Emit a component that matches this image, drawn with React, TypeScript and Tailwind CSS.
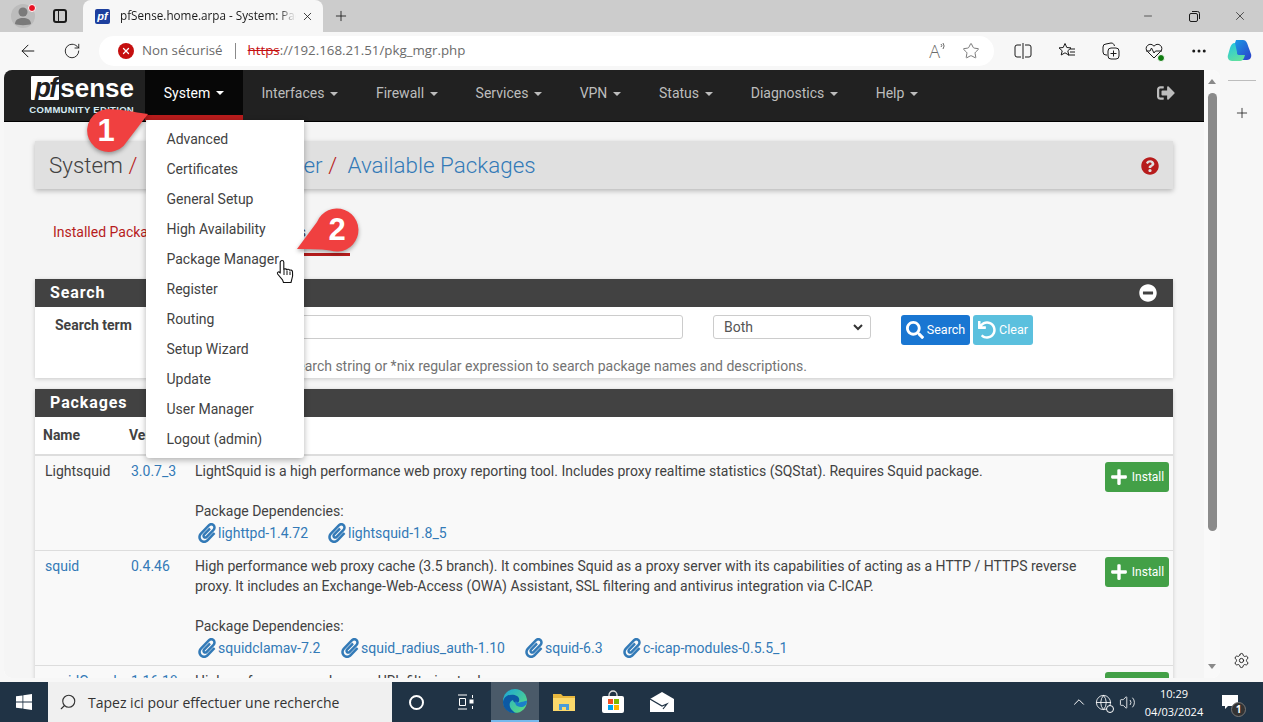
import React from 'react';
import { ArrowLeft, RotateCw, Plus, X, Minus, Search as SearchGlass, ChevronUp, Volume2, Globe, Settings, MoreHorizontal, Star } from 'lucide-react';
import { FaPaperclip, FaSearch, FaUndo, FaPlus, FaSignOutAlt, FaQuestionCircle, FaMinusCircle } from 'react-icons/fa';

const navItems = [
  { label: 'Interfaces', cls: 'w-[114px]' },
  { label: 'Firewall', cls: 'w-[100px]' },
  { label: 'Services', cls: 'w-[104px]' },
  { label: 'VPN', cls: 'w-[79px]' },
  { label: 'Status', cls: 'w-[92px]' },
  { label: 'Diagnostics', cls: 'w-[125px]' },
  { label: 'Help', cls: 'w-[80px]' },
];

const menuItems = [
  'Advanced',
  'Certificates',
  'General Setup',
  'High Availability',
  'Package Manager',
  'Register',
  'Routing',
  'Setup Wizard',
  'Update',
  'User Manager',
  'Logout (admin)',
];

const Caret = () => (
  <span className="ml-[6px] inline-block h-0 w-0 border-x-[4px] border-t-[4px] border-x-transparent border-t-current align-middle" />
);

const Dep = ({ name, cls }: { name: string; cls: string }) => (
  <a className={`flex items-center text-[#337ab7] ${cls}`}>
    <FaPaperclip className="mr-[1px] h-[20px] w-[20px]" />
    <span>{name}</span>
  </a>
);

const InstallButton = () => (
  <button className="mt-[1px] flex h-[30px] w-[64px] items-center justify-center gap-[4px] rounded-[3px] bg-[#43a047] text-[12px] text-white">
    <FaPlus className="h-[18px] w-[18px]" />
    Install
  </button>
);

const Callout = ({ n, cls, d, textCls }: { n: string; cls: string; d: string; textCls: string }) => (
  <div className={`absolute z-30 ${cls}`}>
    <svg width="70" height="54" viewBox="0 0 70 54" className="drop-shadow-[0_2px_2px_rgba(0,0,0,0.35)]">
      <path d={d} fill="#f04040" />
    </svg>
    <span className={`absolute font-['Liberation_Sans',sans-serif] text-[31px] font-bold leading-none text-white ${textCls}`}>{n}</span>
  </div>
);

const HandCursor = () => (
  <svg width="19" height="26" viewBox="0 0 19 26" className="absolute left-[272px] top-[189px] z-40">
    <path
      d="M6 1.500c1 0 1.800.8 1.800 1.800v7.200c.4-.9 2.600-.9 3 .3.5-.8 2.500-.7 2.900.5.6-.6 2.600-.3 2.800 1.300.3 2.600.2 5-.6 7.300l-.9 3.600H7.500l-1-2.600L1.600 15c-.8-1.600 1-2.800 2.300-1.500l.3.6V3.300C4.200 2.300 5 1.500 6 1.500z"
      fill="#fff"
      stroke="#111"
      strokeWidth="1.100"
      strokeLinejoin="round"
    />
    <path d="M8 11v5M11 11.500v4.500M14 12.500v3.500" stroke="#111" strokeWidth="1" />
  </svg>
);

const BrowserTabs = () => (
  <div className="flex h-[32px] items-end bg-[#cccccc] font-['Open_Sans',sans-serif] text-[#1a1a1a]">
    <div className="relative ml-[11px] flex h-[32px] w-[24px] items-center justify-center">
      <div className="h-[24px] w-[24px] rounded-full bg-[#bcbcbc]" />
      <svg width="18" height="20" viewBox="0 0 18 20" className="absolute left-[3px] top-[6px]">
        <circle cx="9" cy="6" r="4.500" fill="#7a7a7a" />
        <path d="M1 18c0-4.500 4-6 8-6s8 1.500 8 6c-2 1.500-14 1.500-16 0z" fill="#7a7a7a" />
      </svg>
      <div className="absolute right-[-1px] top-[4px] h-[8px] w-[8px] rounded-full border border-white bg-[#e81123]" />
    </div>
    <div className="ml-[17px] flex h-[32px] w-[16px] items-center justify-center">
      <div className="h-[14px] w-[14px] rounded-[3px] border-[2px] border-[#1a1a1a] bg-transparent">
        <div className="h-full w-[4px] border-r border-[#1a1a1a]" />
      </div>
    </div>
    <div className="ml-[15px] flex h-[32px] w-[240px] items-center rounded-t-[8px] bg-[#f7f7f7] pl-[12px] pr-[9px] text-[11.700px]">
      <div className="flex h-[15px] w-[15px] items-center justify-center rounded-[2px] bg-[#1d3f9e] font-['Liberation_Sans',sans-serif] text-[11px] font-bold italic leading-none text-white">
        pf
      </div>
      <span className="ml-[10px] w-[176px] overflow-hidden whitespace-nowrap [mask-image:linear-gradient(to_right,black_90%,transparent)]">
        pfSense.home.arpa - System: Package Manager
      </span>
      <X className="ml-auto h-[13px] w-[13px]" strokeWidth={1.500} />
    </div>
    <div className="ml-[10px] flex h-[32px] w-[16px] items-center justify-center">
      <Plus className="h-[16px] w-[16px]" strokeWidth={1.300} />
    </div>
    <div className="ml-auto flex h-[32px] items-center">
      <div className="flex w-[46px] justify-center"><Minus className="h-[12px] w-[12px]" strokeWidth={1.300} /></div>
      <div className="flex w-[46px] justify-center">
        <svg width="11" height="11" viewBox="0 0 11 11" fill="none" stroke="#1a1a1a">
          <rect x="0.500" y="2.500" width="8" height="8" rx="1.500" />
          <path d="M3 .5h5.500A2 2 0 0 1 10.500 2.500V8" />
        </svg>
      </div>
      <div className="flex w-[46px] justify-center"><X className="h-[14px] w-[14px]" strokeWidth={1.200} /></div>
    </div>
  </div>
);

const BrowserToolbar = () => (
  <div className="flex h-[38px] items-center bg-[#f7f7f7] font-['Open_Sans',sans-serif] text-[#1a1a1a]">
    <ArrowLeft className="ml-[18px] h-[20px] w-[20px]" strokeWidth={1.200} />
    <RotateCw className="ml-[25px] h-[18px] w-[18px]" strokeWidth={1.200} />
    <div className="ml-[18px] flex h-[30px] w-[895px] items-center rounded-full bg-white pl-[19px] text-[13.300px]">
      <div className="flex h-[16px] w-[16px] items-center justify-center rounded-full bg-[#c50f0f] text-white">
        <X className="h-[10px] w-[10px]" strokeWidth={3} />
      </div>
      <span className="ml-[8px] text-[#6b6b6b]">Non sécurisé</span>
      <span className="ml-[12px] h-[16px] w-px bg-[#8a8a8a]" />
      <span className="ml-[12px] text-[#c50f0f] line-through">https</span>
      <span className="text-[#6b6b6b]">://192.168.21.51/pkg_mgr.php</span>
      <span className="relative ml-auto text-[18px] font-light leading-none text-[#6b6b6b]">
        A
        <svg width="6" height="8" viewBox="0 0 6 8" fill="none" stroke="#6b6b6b" className="absolute right-[-6px] top-[0px]">
          <path d="M1 5a2 2 0 0 0 0-3M3 7a5 5 0 0 0 0-6" />
        </svg>
      </span>
      <Star className="ml-[22px] mr-[14px] h-[18px] w-[18px] text-[#6b6b6b]" strokeWidth={1.200} />
    </div>
    <svg width="18" height="16" viewBox="0 0 18 16" fill="none" stroke="#1a1a1a" className="ml-[20px]">
      <path d="M7 2H3a2 2 0 0 0-2 2v8a2 2 0 0 0 2 2h4M11 2h4a2 2 0 0 1 2 2v8a2 2 0 0 1-2 2h-4M9 0v16" />
    </svg>
    <svg width="18" height="18" viewBox="0 0 18 18" fill="none" stroke="#1a1a1a" className="ml-[26px]">
      <path d="M7 1.500l1.800 4 4.200.4-3.200 2.900 1 4.200L7 10.800 3.200 13l1-4.200L1 5.900l4.200-.4z" strokeLinejoin="round" />
      <path d="M12 7h5M12 10h5M10 13h7" />
    </svg>
    <svg width="18" height="18" viewBox="0 0 18 18" fill="none" stroke="#1a1a1a" className="ml-[26px]">
      <path d="M5 13H4a3 3 0 0 1-3-3V5a3 3 0 0 1 3-3l5-1c2 0 3 1 3.500 3" />
      <rect x="6" y="6" width="11" height="11" rx="3" />
      <path d="M11.500 8.500v6M8.500 11.500h6" />
    </svg>
    <div className="relative ml-[25px] h-[18px] w-[18px]">
      <svg width="18" height="18" viewBox="0 0 18 18" fill="none" stroke="#1a1a1a">
        <path d="M9 16L2.500 9.500a4 4 0 0 1 0-6 4.200 4.200 0 0 1 6.500.8 4.200 4.200 0 0 1 6.500-.8 4 4 0 0 1 0 6L9 16z" />
        <path d="M1 9h4l1.500-3L9 11l1.500-2H17" />
      </svg>
      <div className="absolute bottom-[-2px] right-[-2px] h-[8px] w-[8px] rounded-full border border-white bg-[#107c10]" />
    </div>
    <MoreHorizontal className="ml-[27px] h-[18px] w-[18px]" strokeWidth={2} />
    <svg width="26" height="26" viewBox="0 0 26 26" className="ml-[19px]">
      <defs>
        <linearGradient id="cop1" x1="0" y1="0" x2="1" y2="1">
          <stop offset="0" stopColor="#1a9be6" />
          <stop offset="1" stopColor="#2b3fc9" />
        </linearGradient>
        <linearGradient id="cop2" x1="0" y1="0" x2="0.500" y2="1">
          <stop offset="0" stopColor="#1fc4e4" />
          <stop offset="1" stopColor="#5fe0a0" />
        </linearGradient>
      </defs>
      <path d="M9 2h7c2 0 3 1 4 3l4 11c1 3-1 6-4 6h-5c-2 0-3-1-4-3L7 8z" fill="url(#cop1)" />
      <path d="M8 5c-3 0-4 2-5 5L1 17c-1 3 1 6 4 6h8c2 0 3-1 4-3l1-3h-6c-2 0-2-1-2-3z" fill="url(#cop2)" />
    </svg>
  </div>
);

const PfLogo = () => (
  <div className="flex w-[141px] flex-col items-end pr-[11px] leading-none">
    <div className="flex h-[24px] items-end">
      <span className="flex h-[24px] w-[28px] items-center justify-center rounded-[1px] bg-white font-['Liberation_Sans',sans-serif] text-[27px] font-bold italic leading-none tracking-[-2px] text-[#212121]">
        pf
      </span>
      <span className="ml-[1px] font-['Liberation_Sans',sans-serif] text-[26px] font-bold leading-[24px] text-white">
        sense
      </span>
    </div>
    <span className="mt-[5px] whitespace-nowrap font-['Liberation_Sans',sans-serif] text-[9.500px] font-bold leading-[10px] tracking-[0.300px] text-[#d7ecf5]">
      COMMUNITY EDITION
    </span>
  </div>
);

const Navbar = () => (
  <div className="flex h-[52px] shrink-0 items-stretch border-b border-black bg-[#212121] text-[14px]">
    <div className="flex items-center"><PfLogo /></div>
    <div className="flex w-[98px] items-center justify-center border-b-[6px] border-[#b71c1c] bg-[#070707] pt-[1px] text-white">
      System<Caret />
    </div>
    {navItems.map((n) => (
      <div key={n.label} className={`flex items-center justify-center pb-[4px] text-[#bdbdbd] ${n.cls}`}>
        <span>{n.label}<Caret /></span>
      </div>
    ))}
    <div className="ml-auto flex items-center pb-[5px] pr-[29px] text-[#bdbdbd]">
      <FaSignOutAlt className="h-[18px] w-[18px]" />
    </div>
  </div>
);

const Panel = ({ title, right, children }: { title: string; right?: React.ReactNode; children: React.ReactNode }) => (
  <div className="bg-white shadow-[0_1px_4px_rgba(0,0,0,0.18)]">
    <div className="flex h-[28px] items-center justify-between bg-[#424242] pl-[15px] pr-[16px] text-[16px] font-bold tracking-[0.900px] text-white">
      {title}
      {right}
    </div>
    {children}
  </div>
);

const PageContent = () => (
  <div className="relative flex min-w-0 flex-1 flex-col overflow-hidden bg-[#f5f5f5] font-['Roboto',sans-serif] text-[14px] text-[#424242]">
    <Navbar />
    <div className="px-[31px] pt-[19px]">
      <div className="flex h-[48px] items-center justify-between bg-[#e0e0e0] pl-[14px] pr-[14px] pt-[1px] text-[22.400px] font-light shadow-[0_2px_5px_rgba(0,0,0,0.25)]">
        <div className="whitespace-nowrap">
          System <span className="text-[#b71c1c]">/</span>
          <span className="ml-[3px] text-[#337ab7]"> Package Manager</span> <span className="text-[#b71c1c]">/</span>
          <span className="ml-[5px] text-[#337ab7]"> Available Packages</span>
        </div>
        <FaQuestionCircle className="mt-[1px] h-[18px] w-[18px] text-[#b71c1c]" />
      </div>
    </div>
    <div className="flex h-[90px] px-[31px] pb-[23px] pt-[33px]">
      <div className="flex items-start pl-[18px] text-[#b71c1c]">Installed Packages</div>
      <div className="ml-[15px] flex h-[34px] w-[165px] items-start border-b-[3px] border-[#b71c1c] text-[#424242]">
        Available Packages
      </div>
    </div>
    <div className="mx-[31px] flex flex-col gap-[11px]">
      <Panel title="Search" right={<FaMinusCircle className="h-[18px] w-[18px] text-white" />}>
        <div className="flex h-[71px] pt-[8px]">
          <div className="w-[110px] pl-[20px] font-bold leading-[20px]">Search term</div>
          <div className="w-[568px] pl-[10px]">
            <div className="h-[24px] w-[528px] rounded-[3px] border border-[#cccccc]" />
            <div className="ml-[88px] mt-[17px] whitespace-nowrap leading-[20px] text-[#737373]">
              Enter a search string or *nix regular expression to search package names and descriptions.
            </div>
          </div>
          <div className="flex h-[24px] w-[158px] items-center justify-between rounded-[3px] border border-[#cccccc] pl-[10px] pr-[7px] text-[#555]">
            Both
            <svg width="10" height="7" viewBox="0 0 10 7" fill="none" stroke="#333" strokeWidth="2"><path d="M1 1l4 4 4-4" /></svg>
          </div>
          <div className="ml-[30px] flex h-[30px] w-[69px] items-center justify-center gap-[3px] rounded-[3px] bg-[#1976d2] text-[12.500px] text-white">
            <FaSearch className="h-[18px] w-[18px]" />
            Search
          </div>
          <div className="ml-[3px] flex h-[30px] w-[60px] items-center justify-center gap-[3px] rounded-[3px] bg-[#5bc0de] text-[12.500px] text-white">
            <FaUndo className="h-[18px] w-[18px]" />
            Clear
          </div>
        </div>
      </Panel>
      <Panel title="Packages">
        <div className="flex h-[39px] items-center border-b-[2px] border-[#dddddd] pl-[8px] font-bold">
          <div className="w-[86px]">Name</div>
          <div className="w-[66px]">Version</div>
          <div>Description</div>
        </div>
        <div className="flex h-[95px] border-b border-[#dddddd] bg-[#f9f9f9] pl-[10px] pr-[4px] pt-[5px] leading-[20px]">
          <div className="w-[86px]">Lightsquid</div>
          <div className="w-[64px] text-[#337ab7]">3.0.7_3</div>
          <div className="flex-1">
            <div>LightSquid is a high performance web proxy reporting tool. Includes proxy realtime statistics (SQStat). Requires Squid package.</div>
            <div className="mt-[20px]">Package Dependencies:</div>
            <div className="mt-[2px] flex pl-[2px]">
              <Dep name="lighttpd-1.4.72" cls="w-[130px]" />
              <Dep name="lightsquid-1.8_5" cls="" />
            </div>
          </div>
          <InstallButton />
        </div>
        <div className="flex h-[115px] border-b border-[#dddddd] bg-[#f9f9f9] pl-[10px] pr-[4px] pt-[5px] leading-[20px]">
          <div className="w-[86px] text-[#337ab7]">squid</div>
          <div className="w-[64px] text-[#337ab7]">0.4.46</div>
          <div className="w-[895px]">
            <div>High performance web proxy cache (3.5 branch). It combines Squid as a proxy server with its capabilities of acting as a HTTP / HTTPS reverse proxy. It includes an Exchange-Web-Access (OWA) Assistant, SSL filtering and antivirus integration via C-ICAP.</div>
            <div className="mt-[20px]">Package Dependencies:</div>
            <div className="mt-[2px] flex pl-[2px]">
              <Dep name="squidclamav-7.2" cls="w-[143px]" />
              <Dep name="squid_radius_auth-1.10" cls="w-[184px]" />
              <Dep name="squid-6.3" cls="w-[98px]" />
              <Dep name="c-icap-modules-0.5.5_1" cls="" />
            </div>
          </div>
          <div className="ml-auto"><InstallButton /></div>
        </div>
        <div className="flex h-[60px] bg-[#f9f9f9] pl-[10px] pr-[4px] pt-[5px] leading-[20px]">
          <div className="w-[86px] text-[#337ab7]">squidGuard</div>
          <div className="w-[64px] text-[#337ab7]">1.16.18</div>
          <div className="flex-1">High performance web proxy URL filtering tool.</div>
          <InstallButton />
        </div>
      </Panel>
    </div>

    {/* dropdown and annotations sit above the page */}
    <div className="absolute left-[142px] top-[50px] z-20 flex w-[158px] flex-col rounded-b-[3px] bg-white py-[4px] shadow-[0_2px_6px_rgba(0,0,0,0.3)]">
      {menuItems.map((m) => (
        <div key={m} className="flex h-[30px] items-center pl-[20.500px] text-[#424242]">{m}</div>
      ))}
    </div>
    <Callout n="1" cls="left-[80px] top-[36px]" textCls="left-[13.500px] top-[9px]" d="M64 8L39.500 40A21.500 21.500 0 1 1 23.500 3C35 3 50 6 64 8z" />
    <Callout n="2" cls="left-[290px] top-[135px]" textCls="left-[34.500px] top-[9px]" d="M3 44L23 17A21.500 21.500 0 1 1 36 45.400C26 44 14 44 3 44z" />
    <HandCursor />
  </div>
);

const Scrollbar = () => (
  <div className="flex w-[16px] flex-col items-center bg-[#f9f9f9]">
    <div className="mt-[9px] h-0 w-0 border-x-[4px] border-b-[5px] border-x-transparent border-b-[#8a8a8a]" />
    <div className="mt-[9px] h-[438px] w-[9px] rounded-full bg-[#8b8b8b]" />
    <div className="mt-[133px] h-0 w-0 border-x-[4px] border-t-[5px] border-x-transparent border-t-[#8a8a8a]" />
  </div>
);

const EdgeSidebar = () => (
  <div className="flex w-[43px] flex-col items-center bg-[#f7f7f7] pt-[10px] text-[#1a1a1a]">
    <div className="h-px w-[28px] bg-[#bdbdbd]" />
    <Plus className="mt-[24px] h-[16px] w-[16px]" strokeWidth={1.200} />
    <Settings className="mt-[531px] h-[17px] w-[17px]" strokeWidth={1.300} />
  </div>
);

const Taskbar = () => (
  <div className="flex h-[40px] shrink-0 items-stretch bg-[#203345] font-['Open_Sans',sans-serif] text-white">
    <div className="flex w-[48px] items-center justify-center">
      <svg width="16" height="16" viewBox="0 0 16 16" fill="#fff">
        <path d="M0 2.300l6.500-.9v6.200H0zM7.300 1.300L16 0v7.600H7.300zM0 8.400h6.500v6.200L0 13.700zM7.300 8.400H16V16l-8.700-1.300z" />
      </svg>
    </div>
    <div className="flex w-[344px] items-center bg-[#f0f0f0] pl-[11px] text-[14px] text-[#333]">
      <SearchGlass className="h-[18px] w-[18px] -scale-x-100" strokeWidth={1.500} />
      <span className="ml-[11px]">Tapez ici pour effectuer une recherche</span>
    </div>
    <div className="flex w-[48px] items-center justify-center">
      <div className="h-[15px] w-[15px] rounded-full border-[2px] border-white" />
    </div>
    <div className="flex w-[51px] items-center justify-center">
      <svg width="17" height="16" viewBox="0 0 17 16" fill="none" stroke="#fff">
        <path d="M1 1h9M1 15h9M2.500 4.500h6v7h-6zM15.500 1v3M15.500 12v3" />
        <rect x="13" y="6" width="3" height="3" fill="#fff" />
      </svg>
    </div>
    <div className="flex w-[48px] items-center justify-center border-b-[2px] border-[#76b9ed] bg-[#4a5a69]">
      <svg width="24" height="24" viewBox="0 0 24 24">
        <defs>
          <linearGradient id="edge1" x1="0" y1="0" x2="1" y2="1">
            <stop offset="0" stopColor="#1aa5d8" />
            <stop offset="1" stopColor="#5fe07a" />
          </linearGradient>
        </defs>
        <circle cx="12" cy="12" r="12" fill="url(#edge1)" />
        <path d="M0 13C1 6 9 4 14 7c3 2 3 6 0 7-2 0-4-1-4-3-4 1-5 7 0 11 1 1 2 2 4 2C6 25 0 20 0 13z" fill="#0c59a4" />
        <path d="M24 12c0 4-3 6-6 6-5 0-7-4-5-6 1 2 3 2 5 1 2 0 5-2 6-1z" fill="#1b7fc9" />
      </svg>
    </div>
    <div className="flex w-[49px] items-center justify-center">
      <svg width="22" height="18" viewBox="0 0 22 18">
        <path d="M0 1h8l2 2h12v15H0z" fill="#e8b83e" />
        <path d="M0 5h22v13H0z" fill="#fbd96b" />
        <path d="M6 17v-6h10v6h-3v-3H9v3z" fill="#4a9bd8" />
      </svg>
    </div>
    <div className="flex w-[49px] items-center justify-center">
      <svg width="24" height="24" viewBox="0 0 24 24">
        <path d="M8 7V5a4 4 0 0 1 8 0v2" fill="none" stroke="#ddd" strokeWidth="1.300" />
        <rect x="1" y="6" width="22" height="17" rx="2" fill="#fff" />
        <rect x="7" y="9" width="5" height="5" fill="#f25022" />
        <rect x="13" y="9" width="5" height="5" fill="#7fba00" />
        <rect x="7" y="15" width="5" height="5" fill="#00a4ef" />
        <rect x="13" y="15" width="5" height="5" fill="#ffb900" />
      </svg>
    </div>
    <div className="flex w-[49px] items-center justify-center">
      <svg width="24" height="20" viewBox="0 0 24 20">
        <path d="M12 0l12 7v13H0V7z" fill="#fff" />
        <path d="M0 7l12 7 5-2-4 5" fill="none" stroke="#203345" strokeWidth="1.200" />
      </svg>
    </div>
    <div className="ml-auto flex items-center">
      <ChevronUp className="h-[18px] w-[18px]" strokeWidth={1.300} />
      <div className="relative ml-[7px]">
        <Globe className="h-[17px] w-[17px]" strokeWidth={1.200} />
        <div className="absolute bottom-[-2px] right-[-2px] h-[8px] w-[8px] rounded-full border border-white bg-[#203345]" />
      </div>
      <Volume2 className="ml-[7px] h-[17px] w-[17px]" strokeWidth={1.200} />
      <div className="ml-[1px] flex w-[74px] flex-col items-center pt-[1px] text-[11px] leading-[18px]">
        <span>10:29</span>
        <span>04/03/2024</span>
      </div>
      <div className="relative ml-[9px] mr-[23px] flex h-[40px] w-[20px] items-center justify-center">
        <svg width="16" height="15" viewBox="0 0 16 15" fill="#fff">
          <path d="M0 0h16v11H6l-3 3v-3H0z" />
        </svg>
        <div className="absolute bottom-[5px] right-[-6px] flex h-[15px] w-[15px] items-center justify-center rounded-full border border-[#777] bg-[#333] text-[10px] font-bold">1</div>
      </div>
    </div>
  </div>
);

export default function App() {
  return (
    <div className="flex h-[722px] w-[1263px] flex-col overflow-hidden bg-[#f7f7f7]">
      <BrowserTabs />
      <BrowserToolbar />
      <div className="flex h-[612px] shrink-0 pb-[4px] pl-[4px]">
        <div className="flex min-w-0 flex-1 overflow-hidden rounded-[8px] bg-white">
          <PageContent />
          <Scrollbar />
        </div>
        <EdgeSidebar />
      </div>
      <Taskbar />
    </div>
  );
}
